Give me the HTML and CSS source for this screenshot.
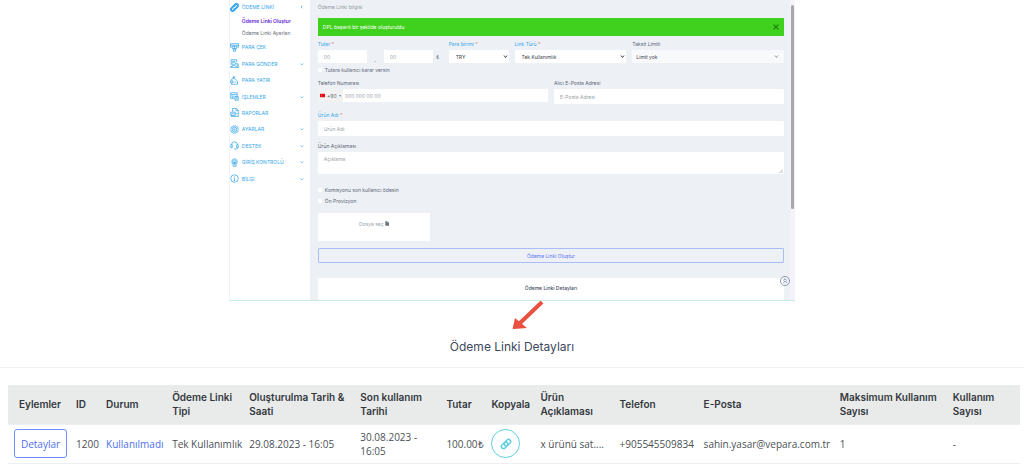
FILE: index.html
```html
<!DOCTYPE html>
<html lang="tr">
<head>
<meta charset="utf-8">
<meta name="viewport" content="width=device-width, initial-scale=1">
<title>Ödeme Linki</title>
<link rel="stylesheet" href="styles.css">
</head>
<body>
<section class="panel">
  <nav class="sidebar">
    <a class="nav-item nav-top" href="#"><svg class="icon" viewBox="0 0 24 24"><path stroke-width="5" d="M10 15a4 4 0 0 0 6-1l4-4a4 4 0 0 0-6-6l-4 4M14 9a4 4 0 0 0-6 1l-4 4a4 4 0 0 0 6 6l4-4"/></svg><span>ÖDEME LİNKİ</span><svg class="chev" viewBox="0 0 10 10"><path d="M6 2 3 5l3 3"/></svg></a>
    <a class="sub active" href="#">Ödeme Linki Oluştur</a>
    <a class="sub" href="#">Ödeme Linki Ayarları</a>
    <div class="nav-list">
      <a class="nav-item" href="#"><svg class="icon" viewBox="0 0 24 24"><path d="M5 11H1V2h22v9h-4M1 6h22M6 9h12v6H6zM9 15v7h6v-7M12 9v9"/></svg><span>PARA ÇEK</span></a>
      <a class="nav-item" href="#"><svg class="icon" viewBox="0 0 24 24"><path d="M3 16V2h15v7M6 6h8M1 20h6M10 8a4 4 0 1 1 0 8 4 4 0 0 1 0-8M4 22c0-7 12-7 12 0M14 13h8v8h-5M19 15v4M1 23h22"/></svg><span>PARA GÖNDER</span><svg class="chev" viewBox="0 0 10 10"><path d="m2 4 3 3 3-3"/></svg></a>
      <a class="nav-item" href="#"><svg class="icon" viewBox="0 0 24 24"><path d="M4 12V9l4-2h5l7 7v8H4v-3M9 7V3h6M7 3l4-2M1 13h7v5H1zM12 16h4"/></svg><span>PARA YATIR</span></a>
      <a class="nav-item" href="#"><svg class="icon" viewBox="0 0 24 24"><path d="M12 17H2V2h17v9M2 7h17M5 11h6M5 14h4M13 12h9v10h-9zM15 15h5M15 18h5"/></svg><span>İŞLEMLER</span><svg class="chev" viewBox="0 0 10 10"><path d="m2 4 3 3 3-3"/></svg></a>
      <a class="nav-item" href="#"><svg class="icon" viewBox="0 0 24 24"><path d="M7 10V1h10l5 5v17H4v-3M16 1v6h6M2 11h12v9H2zM5 17v-3M8 17v-4M11 17v-3M16 15h4"/></svg><span>RAPORLAR</span></a>
      <a class="nav-item" href="#"><svg class="icon" viewBox="0 0 24 24"><path d="m9 2 3 1 3-1 2 3 4 1v4l2 2-2 3v3l-4 1-2 3-3-1-3 1-2-3-4-1v-3l-2-3 2-2V6l4-1z"/><circle cx="12" cy="12" r="6"/><circle cx="12" cy="12" r="2"/></svg><span>AYARLAR</span><svg class="chev" viewBox="0 0 10 10"><path d="m2 4 3 3 3-3"/></svg></a>
      <a class="nav-item" href="#"><svg class="icon" viewBox="0 0 24 24"><path d="M4 10a8 8 0 0 1 16 0M2 10h4v8H2zM18 10h4v8h-4zM20 18c0 3-3 4-6 4M11 21h3"/></svg><span>DESTEK</span><svg class="chev" viewBox="0 0 10 10"><path d="m2 4 3 3 3-3"/></svg></a>
      <a class="nav-item" href="#"><svg class="icon" viewBox="0 0 24 24"><path d="M6 15C3 7 7 2 12 2s9 5 6 13M9 14c-3-6 0-9 3-9s6 3 3 9M12 9v8M8 13h8v9H8zM11 17h3"/></svg><span>GİRİŞ KONTROLÜ</span><svg class="chev" viewBox="0 0 10 10"><path d="m2 4 3 3 3-3"/></svg></a>
      <a class="nav-item" href="#"><svg class="icon" viewBox="0 0 24 24"><circle cx="12" cy="12" r="10"/><path d="M12 6v2M10 11h2v6M10 17h4"/></svg><span>BİLGİ</span><svg class="chev" viewBox="0 0 10 10"><path d="m2 4 3 3 3-3"/></svg></a>
    </div>
  </nav>

  <form class="content">
    <h1 class="crumb">Ödeme Linki bilgisi</h1>
    <div class="alert"><span>DPL başarılı bir şekilde oluşturuldu</span><button class="close" type="button" aria-label="Kapat"><svg viewBox="0 0 10 10"><path d="m1 1 8 8M9 1 1 9"/></svg></button></div>

    <div class="row-amount">
      <div class="field">
        <label class="req" for="amount">Tutar <i>*</i></label>
        <div class="amount"><input id="amount" type="text" placeholder="00"><span class="comma">,</span><input type="text" placeholder="00" aria-label="Kuruş"><span class="lira">₺</span></div>
      </div>
      <div class="field">
        <label class="req" for="currency">Para birimi <i>*</i></label>
        <div class="select"><select id="currency"><option>TRY</option></select><svg viewBox="0 0 10 10"><path d="m2 3 3 4 3-4"/></svg></div>
      </div>
      <div class="field">
        <label class="req" for="type">Link Türü <i>*</i></label>
        <div class="select"><select id="type"><option>Tek Kullanımlık</option></select><svg viewBox="0 0 10 10"><path d="m2 3 3 4 3-4"/></svg></div>
      </div>
      <div class="field">
        <label for="limit">Taksit Limiti</label>
        <div class="select muted"><select id="limit"><option>Limit yok</option></select><svg viewBox="0 0 10 10"><path d="m2 3 3 4 3-4"/></svg></div>
      </div>
    </div>
    <label class="check"><input type="checkbox">Tutara kullanıcı karar versin</label>

    <div class="row-contact">
      <div class="field">
        <label for="phone">Telefon Numarası</label>
        <div class="phone"><button type="button" class="code"><svg class="flag" viewBox="0 0 18 12"><path fill="#e30a17" d="M0 0h18v12H0z"/><circle cx="7" cy="6" r="3" fill="#f47a80"/><circle cx="8" cy="6" r="2.4" fill="#e30a17"/></svg>+90<svg class="caret" viewBox="0 0 6 4"><path d="M0 0h6L3 4z"/></svg></button><input id="phone" type="tel" placeholder="000 000 00 00"></div>
      </div>
      <div class="field">
        <label for="mail">Alıcı E-Posta Adresi</label>
        <input id="mail" class="tall" type="email" placeholder="E-Posta Adresi">
      </div>
    </div>

    <div class="field product">
      <label class="req" for="product">Ürün Adı <i>*</i></label>
      <input id="product" class="tall" type="text" placeholder="Ürün Adı">
    </div>
    <div class="field about">
      <label for="about">Ürün Açıklaması</label>
      <div class="area"><textarea id="about" placeholder="Açıklama"></textarea><svg viewBox="0 0 8 8"><path d="M1 8 8 1M5 8l3-3"/></svg></div>
    </div>

    <div class="checks">
      <label class="check"><input type="checkbox">Komisyonu son kullanıcı ödesin</label>
      <label class="check"><input type="checkbox">Ön Provizyon</label>
    </div>
    <label class="file"><input type="file">Dosya seç<svg viewBox="0 0 12 14"><path d="M1 0h6v5h5v9H1zM8 0l4 4H8z"/></svg></label>
    <button class="create" type="button">Ödeme Linki Oluştur</button>
    <h2 class="card">Ödeme Linki Detayları</h2>
    <button class="to-top" type="button" aria-label="Yukarı"><svg viewBox="0 0 22 22"><circle cx="11" cy="11" r="10"/><path d="m7 10 4-4 4 4M7 15l4-4 4 4"/></svg></button>
  </form>
  <div class="scroll"><div class="thumb"></div></div>
</section>

<div class="arrow"><svg viewBox="0 0 32 30"><path class="shaft" d="M30 1 8 22"/><path class="head" d="m3 17 12 10-13 1q-2 0-1-2z"/></svg></div>
<h2 class="title">Ödeme Linki Detayları</h2>

<div class="table-wrap">
<table>
  <colgroup><col class="w63"><col class="w30"><col class="w66"><col class="w77"><col class="w111"><col class="w86"><col class="w45"><col class="w49"><col class="w79"><col class="w84"><col class="w136"><col class="w113"><col class="w72"></colgroup>
  <thead><tr><th>Eylemler</th><th>ID</th><th>Durum</th><th>Ödeme Linki<br>Tipi</th><th>Oluşturulma Tarih &amp;<br>Saati</th><th>Son kullanım<br>Tarihi</th><th>Tutar</th><th>Kopyala</th><th>Ürün<br>Açıklaması</th><th>Telefon</th><th>E-Posta</th><th>Maksimum Kullanım<br>Sayısı</th><th>Kullanım<br>Sayısı</th></tr></thead>
  <tbody><tr><td><button class="details" type="button">Detaylar</button></td><td>1200</td><td><a href="#">Kullanılmadı</a></td><td>Tek Kullanımlık</td><td>29.08.2023 - 16:05</td><td>30.08.2023 -<br>16:05</td><td>100.00₺</td><td><button class="copy" type="button" aria-label="Kopyala"><svg viewBox="0 0 24 24"><path d="M9 14a4 4 0 0 0 6 1l5-5a4 4 0 0 0-6-6l-4 4a4 4 0 0 0 0 6M15 10a4 4 0 0 0-6-1l-5 5a4 4 0 0 0 6 6l4-4a4 4 0 0 0 0-6"/></svg></button></td><td>x ürünü sat....</td><td>+905545509834</td><td>sahin.yasar@vepara.com.tr</td><td>1</td><td>-</td></tr></tbody>
</table>
</div>
</body>
</html>
```
FILE: styles.css
```css
* { box-sizing: border-box; }
body { margin: 0; background: #fff; font-family: Inter, "Liberation Sans", sans-serif; font-size: 10px; line-height: 14px; color: #4b4f55; }
button, input, select, textarea { font: inherit; color: inherit; margin: 0; border: 0; border-radius: 0; padding: 0; background: none; min-width: 0; }
a { text-decoration: none; color: inherit; }
svg { display: block; fill: none; stroke: currentColor; }

.panel { display: flex; width: 55.3%; margin: 0 auto; border-bottom: 1px solid #c3ecdb; font-size: 5px; line-height: 8px; color: #5b6575; }
.sidebar { flex: 0 0 81px; border-left: 1px solid #f0f3f5; }
.nav-item { display: flex; align-items: center; gap: 3px; padding: 0 6px 0 0; color: #35a6ea; }
.nav-item span { flex: 1; white-space: nowrap; }
.nav-top { height: 14px; }
.icon { width: 9px; height: 9px; stroke-width: 2; }
.chev { width: 4px; height: 4px; stroke-width: 2; }
.sub { display: block; padding-left: 12px; height: 12px; line-height: 12px; white-space: nowrap; color: #666b73; }
.sub.active { color: #6528d7; font-weight: 600; margin-top: 1px; }
.nav-list { display: grid; grid-auto-rows: 1fr; height: 148px; }

.content { position: relative; flex: 1; min-width: 0; display: flex; flex-direction: column; align-items: stretch; padding: 3px 6px 0 8px; background: #edf1f6; }
.crumb { margin: 0 0 7px; font-size: 5px; font-weight: 400; color: #9299a2; }
.alert { display: flex; align-items: center; justify-content: space-between; height: 18px; padding: 0 5px; background: #3fd11d; color: #fff; }
.close { width: 6px; height: 6px; color: #1f7a12; }
.close svg { width: 6px; height: 6px; stroke-width: 2; }
.row-amount { display: grid; grid-template-columns: 125fr 60fr 112fr 152fr; gap: 6px; margin-top: 4px; }
.field { display: flex; flex-direction: column; }
.field > label { height: 10px; }
.req { color: #35a6ea; }
.req i { color: #ef8068; font-style: normal; }
input, select, .phone { height: 13px; background: #fff; border-radius: 1px; }
input { padding: 0 6px; width: 100%; }
::placeholder { color: #9a9fa7; opacity: 1; }
.amount { display: grid; grid-template-columns: 49fr 17px 49fr 10px; align-items: center; text-align: center; }
.amount input { text-align: left; }
.comma { padding-top: 4px; }
.select { display: grid; align-items: center; }
.select > * { grid-area: 1 / 1; }
.select select { width: 100%; appearance: none; padding: 0 7px; color: #3e434a; }
.select svg { width: 5px; height: 5px; justify-self: end; margin-right: 1px; stroke-width: 2; pointer-events: none; color: #3e434a; }
.muted select { background: #f8f9fa; padding: 0 4px; }
.select.muted svg { margin-right: 5px; stroke-width: 1; }
.check { display: flex; align-items: center; gap: 3px; height: 11px; }
.check input { appearance: none; width: 4px; height: 4px; padding: 0; }
.row-amount + .check { margin-top: 1px; }
.row-contact { display: grid; grid-template-columns: 1fr 1fr; gap: 6px; margin-top: 4px; }
.tall { height: 15px; }
.phone { display: flex; }
.phone input { padding: 0 2px; }
.code { display: flex; align-items: center; gap: 2px; padding: 0 2px; background: #f2f2f2; }
.flag { width: 7px; height: 5px; stroke: none; }
.caret { width: 3px; height: 2px; fill: currentColor; stroke: none; }
.product { margin-top: 7px; }
.about { margin-top: 6px; }
.area { display: grid; }
.area > * { grid-area: 1 / 1; }
.area svg { width: 4px; height: 4px; place-self: end; margin: 1px; pointer-events: none; }
textarea { height: 22px; padding: 3px 6px; background: #fff; border-radius: 1px; resize: none; }
.checks { margin-top: 10px; }
.file { display: flex; justify-content: center; gap: 1px; width: 24%; height: 28px; padding-top: 7px; margin-top: 7px; background: #fff; color: #9a9fa7; }
.file input { display: none; }
.file svg { width: 4px; height: 5px; margin-top: 1px; fill: #6c727b; stroke: none; }
.create { height: 15px; margin-top: 7px; border: 1px solid #a9bdfb; border-radius: 1px; color: #5a73f3; }
.card { height: 22px; margin: 15px 0 0; padding-top: 6px; background: #fff; font-size: 5px; font-weight: 500; text-align: center; color: #3d485c; }
.to-top { position: absolute; right: 0; bottom: 14px; width: 10px; height: 10px; color: #8492a8; }
.to-top svg { stroke-width: 2; }
.scroll { flex: 0 0 5px; padding: 5px 1px 0; background: #f4f3fb; }
.thumb { height: 204px; background: #a7a7ab; border-radius: 2px; }

.arrow { display: flex; justify-content: center; padding-left: 32px; color: #ea5040; }
.arrow svg { width: 32px; height: 30px; }
.shaft { stroke-width: 4; }
.head { fill: currentColor; stroke: none; }
.title { margin: 0; padding: 7px 0 12px; border-bottom: 1px solid #f0f0f2; font-size: 12px; line-height: 17px; font-weight: 400; text-align: center; color: #3d485c; }

.table-wrap { padding: 17px 4px 0 8px; }
table { width: 100%; table-layout: fixed; border-collapse: collapse; }
th, td { height: 39px; padding: 0 0 0 5px; text-align: left; vertical-align: middle; white-space: nowrap; border-bottom: 1px solid #eeeff0; }
th { background: #e9ebeb; font-weight: 600; color: #34383d; }
td { font-family: "Open Sans", "Liberation Sans", sans-serif; }
th:first-child { padding-left: 11px; }
td:first-child { padding-left: 6px; }
td a { color: #4e6ff0; }
.w63 { width: 63px; } .w30 { width: 30px; } .w66 { width: 66px; } .w77 { width: 77px; }
.w111 { width: 111px; } .w86 { width: 86px; } .w45 { width: 45px; } .w49 { width: 49px; }
.w79 { width: 79px; } .w84 { width: 84px; } .w136 { width: 136px; } .w113 { width: 113px; } .w72 { width: 72px; }
.details { display: block; width: 53px; height: 29px; border: 1px solid #6f8df8; border-radius: 3px; color: #4e6ff0; }
.copy { display: grid; place-items: center; width: 29px; height: 29px; border: 1px solid #5fcfe0; border-radius: 50%; color: #5fcfe0; }
.copy svg { width: 12px; height: 12px; stroke-width: 3; }
```
